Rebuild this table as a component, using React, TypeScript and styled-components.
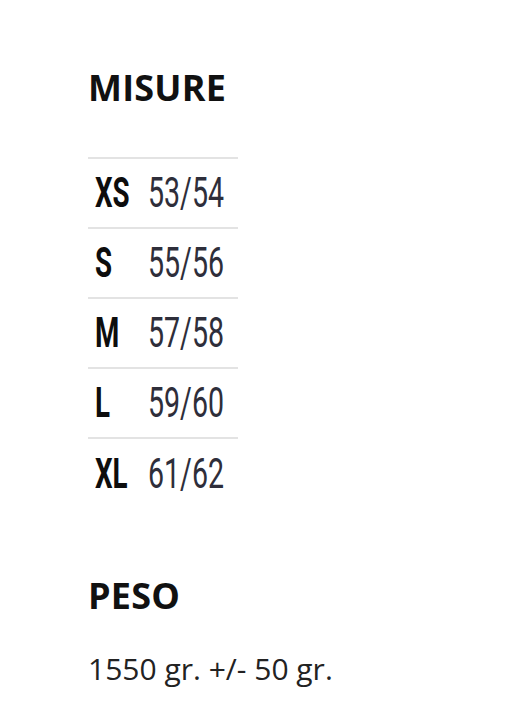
import styled, { createGlobalStyle } from "styled-components";

const GlobalStyle = createGlobalStyle`
  html, body {
    margin: 0;
    padding: 0;
    background: #ffffff;
  }
  body {
    font-family: "Open Sans", "Liberation Sans", sans-serif;
    color: #1a1a1a;
  }
`;

const Page = styled.div`
  padding: 62px 0 0 88px;
`;

const Heading = styled.h2<{ $gap?: number }>`
  margin: ${(p) => p.$gap ?? 0}px 0 0;
  font-family: "Open Sans", sans-serif;
  font-weight: 700;
  font-size: 36px;
  line-height: 52px;
  color: #111;
  letter-spacing: 0.2px;
`;

const SizeTable = styled.table`
  margin-top: 43px;
  width: 150px;
  border-collapse: collapse;
  table-layout: fixed;
`;

const Row = styled.tr`
  height: 70px;
  border-top: 2px solid #e3e3e3;
`;

const Cell = styled.td<{ $label?: boolean }>`
  padding: 0 0 0 ${(p) => (p.$label ? "7px" : "0")};
  width: ${(p) => (p.$label ? "53px" : "90px")};
  vertical-align: middle;
  white-space: nowrap;
  overflow: visible;
`;

// condensed face: squeeze Roboto horizontally
const Narrow = styled.span<{ $bold?: boolean }>`
  display: inline-block;
  font-family: Roboto, "Open Sans", sans-serif;
  font-size: 42px;
  line-height: 1;
  font-weight: ${(p) => (p.$bold ? 700 : 400)};
  color: ${(p) => (p.$bold ? "#0d0d0d" : "#2e2e3a")};
  transform: scaleX(${(p) => (p.$bold ? 0.66 : 0.68)});
  transform-origin: left center;
`;

const Weight = styled.p`
  margin: 26px 0 0;
  font-family: "Open Sans", sans-serif;
  font-size: 30px;
  color: #222;
`;

const sizes = [
  ["XS", "53/54"],
  ["S", "55/56"],
  ["M", "57/58"],
  ["L", "59/60"],
  ["XL", "61/62"],
];

export default function App() {
  return (
    <>
      <GlobalStyle />
      <Page>
        <Heading>MISURE</Heading>
        <SizeTable>
          <tbody>
            {sizes.map(([label, value]) => (
              <Row key={label}>
                <Cell $label>
                  <Narrow $bold>{label}</Narrow>
                </Cell>
                <Cell>
                  <Narrow>{value}</Narrow>
                </Cell>
              </Row>
            ))}
          </tbody>
        </SizeTable>
        <Heading $gap={62}>PESO</Heading>
        <Weight>1550 gr. +/- 50 gr.</Weight>
      </Page>
    </>
  );
}
